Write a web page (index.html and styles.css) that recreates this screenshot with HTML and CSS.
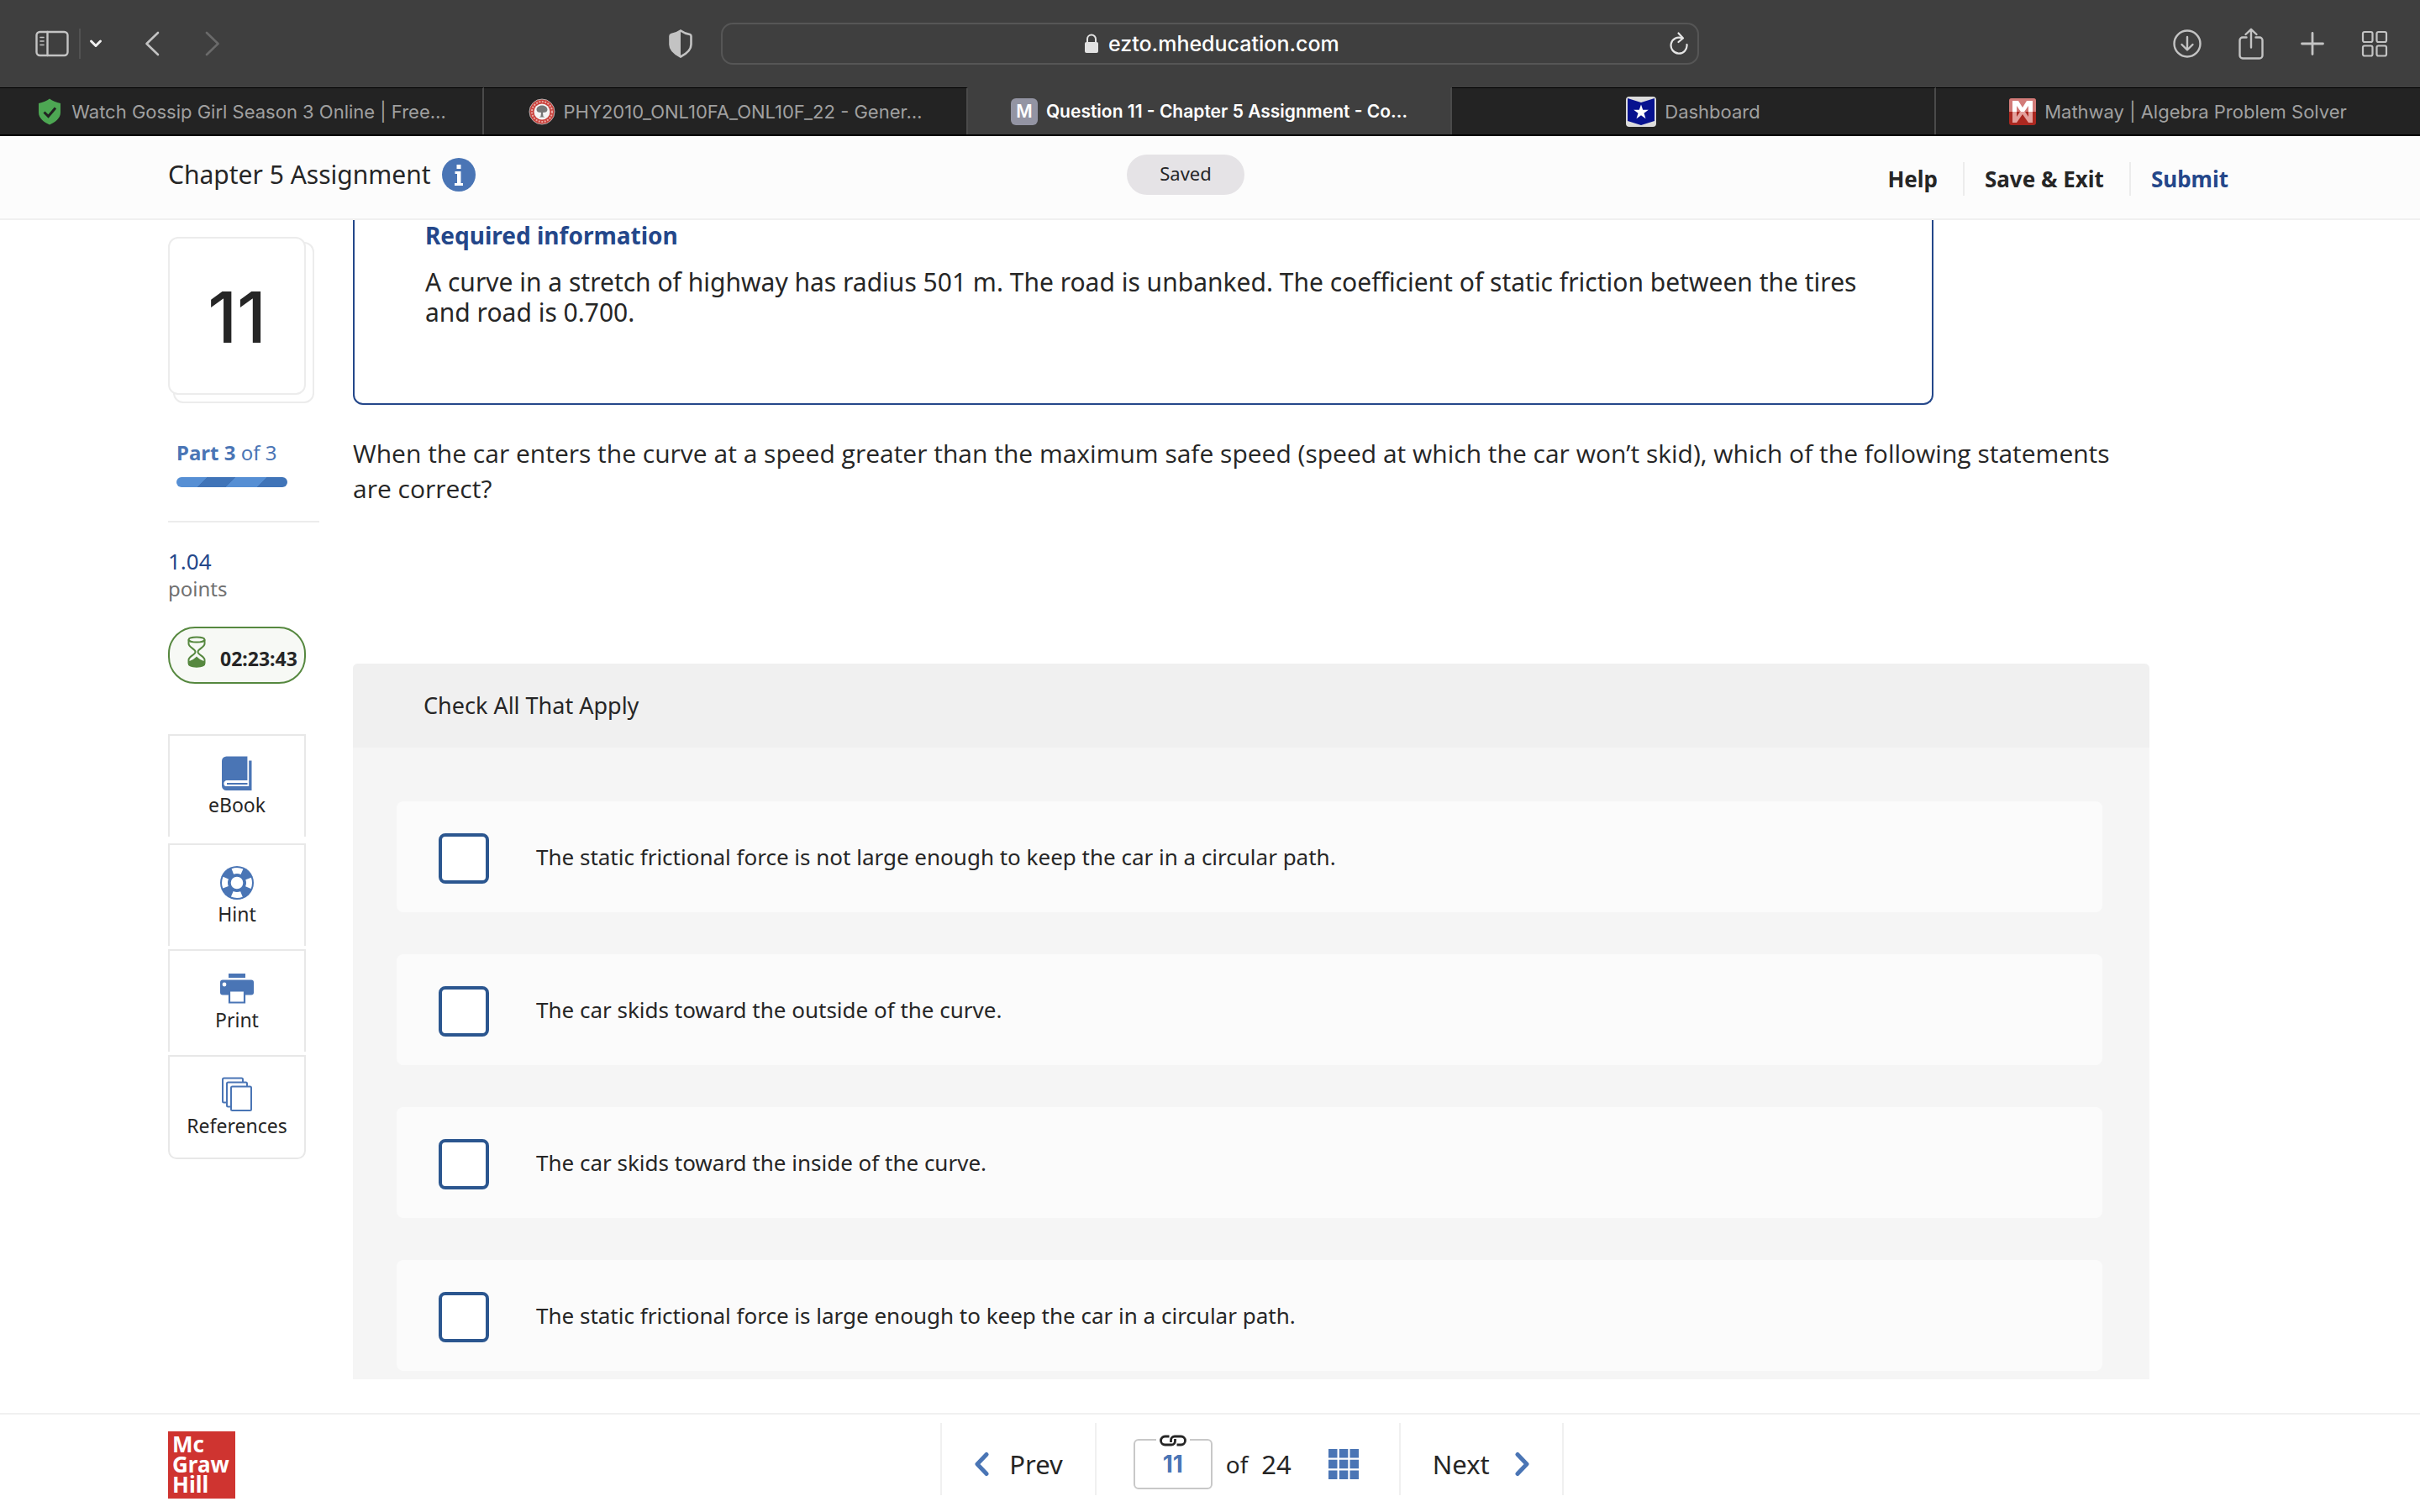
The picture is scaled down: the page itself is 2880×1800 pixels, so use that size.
FILE: index.html
```html
<!DOCTYPE html>
<html lang="en">
<head>
    <meta charset="UTF-8">
    <title>Question 11 - Chapter 5 Assignment - Connect</title>
    <link rel="stylesheet" href="styles.css">
</head>
<body>
    <!-- browser toolbar -->
    <div class="toolbar">
        <div class="toolbar-left">
            <button class="tool-btn" aria-label="Sidebar">
                <svg width="40" height="32" viewBox="0 0 40 32" fill="none" stroke="#c3c3c3" stroke-width="2.4" stroke-linecap="round"><rect x="1.5" y="2" width="37" height="28" rx="4"/><path d="M14.5 2v28"/><path stroke-width="1.6" d="M6 8.500h4M6 13h4M6 17.500h4"/></svg>
            </button>
            <span class="tool-sep"></span>
            <button class="tool-btn menu-btn" aria-label="Tab groups">
                <svg width="16" height="12" viewBox="0 0 16 12" fill="none" stroke="#f0f0f0" stroke-width="3" stroke-linecap="round" stroke-linejoin="round"><path d="M2.500 3l5.500 5.500L13.500 3"/></svg>
            </button>
            <button class="tool-btn back-btn" aria-label="Back">
                <svg width="18" height="30" viewBox="0 0 18 30" fill="none" stroke="#c3c3c3" stroke-width="2.600" stroke-linecap="round" stroke-linejoin="round"><path d="M16 2L2.500 15L16 28"/></svg>
            </button>
            <button class="tool-btn forward-btn" aria-label="Forward">
                <svg width="18" height="30" viewBox="0 0 18 30" fill="none" stroke="#6a6a6a" stroke-width="2.600" stroke-linecap="round" stroke-linejoin="round"><path d="M2 2l13.500 13L2 28"/></svg>
            </button>
            <button class="tool-btn shield-btn" aria-label="Privacy report">
                <svg width="28" height="34" viewBox="0 0 28 34"><path d="M14 1.500C17.500 4 22 5.500 25 6q1.500 .5 1.500 2v10C26.500 25 20 29.500 14 32.500C8 29.500 1.500 25 1.500 18V8q0-1.500 1.500-2C6 5.500 10.500 4 14 1.500z" fill="none" stroke="#c3c3c3" stroke-width="2.600"/><path d="M14 1.500C10.500 4 6 5.500 3 6q-1.500 .5-1.500 2v10C1.500 25 8 29.500 14 32.500z" fill="#c3c3c3"/></svg>
            </button>
        </div>
        <div class="address">
            <svg width="16" height="24" viewBox="0 0 16 24"><rect x="0" y="10" width="16" height="13" rx="2" fill="#e2e2e2"/><path d="M3 11V6.500a5 5 0 0 1 10 0V11" fill="none" stroke="#e2e2e2" stroke-width="2"/></svg>
            <input class="address-input" type="text" aria-label="Address" value="ezto.mheducation.com">
            <button class="tool-btn reload-btn" aria-label="Reload">
                <svg width="24" height="28" viewBox="0 0 24 28" fill="none" stroke="#e6e6e6" stroke-width="2.200" stroke-linecap="round" stroke-linejoin="round"><path d="M16 8.500A9.500 9.500 0 1 0 21.500 16"/><path d="M11.500 2.500L17 8.500L11.500 13"/></svg>
            </button>
        </div>
        <div class="toolbar-right">
            <button class="tool-btn" aria-label="Downloads">
                <svg width="34" height="38" viewBox="0 0 34 38" fill="none" stroke="#c3c3c3" stroke-width="2.400" stroke-linecap="round" stroke-linejoin="round"><circle cx="17" cy="19" r="15.500"/><path d="M17 11v15M10.500 20L17 26.500L23.500 20"/></svg>
            </button>
            <button class="tool-btn" aria-label="Share">
                <svg width="30" height="38" viewBox="0 0 30 38" fill="none" stroke="#c3c3c3" stroke-width="2.400" stroke-linecap="round" stroke-linejoin="round"><path d="M9.500 11.500H5a3.500 3.500 0 0 0-3.500 3.500v18A3.500 3.500 0 0 0 5 36.500h20a3.500 3.500 0 0 0 3.500-3.500V15a3.500 3.500 0 0 0-3.500-3.500h-4.500"/><path d="M15 23.500V2M8.500 8L15 1.800L21.500 8"/></svg>
            </button>
            <button class="tool-btn" aria-label="New tab">
                <svg width="28" height="28" viewBox="0 0 28 28" fill="none" stroke="#c3c3c3" stroke-width="2.800" stroke-linecap="round"><path d="M14 1.500v25M1.500 14h25"/></svg>
            </button>
            <button class="tool-btn" aria-label="Tab overview">
                <svg width="32" height="32" viewBox="0 0 32 32" fill="none" stroke="#c3c3c3" stroke-width="2.200"><rect x="2" y="2" width="11.500" height="12" rx="2"/><rect x="18.500" y="2" width="11.500" height="12" rx="2"/><rect x="2" y="18.500" width="11.500" height="12" rx="2"/><rect x="18.500" y="18.500" width="11.500" height="12" rx="2"/></svg>
            </button>
        </div>
    </div>

    <!-- browser tabs -->
    <nav class="tabs">
        <a class="tab" href="#">
            <svg width="32" height="32" viewBox="0 0 32 32"><path d="M16 0.500C19 3 24 5 29 6v11c0 7-6.500 11.500-13 14.500C9.500 28.500 3 24 3 17V6c5-1 10-3 13-5.500z" fill="#4da753"/><path d="M9.500 16.500l5 5l8.500-10" fill="none" stroke="#222" stroke-width="3"/></svg>
            <span>Watch Gossip Girl Season 3 Online | Free…</span>
        </a>
        <a class="tab" href="#">
            <svg width="32" height="32" viewBox="0 0 32 32"><circle cx="16" cy="16" r="15" fill="#c9403a"/><circle cx="16" cy="16" r="12" fill="none" stroke="#e9a8a4" stroke-width="2" stroke-dasharray="2 1.500"/><circle cx="16" cy="16" r="15" fill="none" stroke="#b9b0b0"/><circle cx="16" cy="16" r="9.500" fill="#f4f4f4"/><path d="M16 8.500c4 0 6.500 2.500 6.500 5c0 2.500-2 3.500-5.500 3.500l.5 4.500l2 1h-7l2-1l.5-4.500c-3.500 0-5.500-1-5.500-3.500c0-2.500 2.500-5 6.500-5z" fill="#777"/></svg>
            <span>PHY2010_ONL10FA_ONL10F_22 - Gener…</span>
        </a>
        <a class="tab tab-active" href="#">
            <span class="tab-letter">M</span>
            <span>Question 11 - Chapter 5 Assignment - Co…</span>
        </a>
        <a class="tab" href="#">
            <svg width="36" height="36" viewBox="0 0 36 36"><rect width="36" height="36" rx="4" fill="#dcdcdc"/><path d="M2 2l16 5l16-5v27l-16 5l-16-5z" fill="#07128f"/><path d="M18 9.500l2.200 6.200h6.600l-5.300 4l2 6.500l-5.500-3.900l-5.500 3.900l2-6.500l-5.300-4h6.600z" fill="#fff"/></svg>
            <span>Dashboard</span>
        </a>
        <a class="tab" href="#">
            <svg width="32" height="32" viewBox="0 0 32 32"><rect width="32" height="32" rx="3" fill="#ab2820"/><path d="M0 16V3a3 3 0 0 1 3-3h26a3 3 0 0 1 3 3v13z" fill="#d27b78"/><path d="M4 16V3h7l5 8l5-8h7v13h-5V9l-5 7h-4l-5-7v7z" fill="#fff"/><path d="M4 16v13h5l7-10l7 10h5V16h-5v6l-4-6h-6l-4 6v-6z" fill="#e3a19d"/></svg>
            <span>Mathway | Algebra Problem Solver</span>
        </a>
    </nav>

    <header class="header">
        <div class="header-title">
            <h1>Chapter 5 Assignment</h1>
            <button class="info-btn" aria-label="Assignment info">
                <svg width="40" height="40" viewBox="0 0 40 40"><circle cx="20" cy="20" r="20" fill="#4a75b5"/><path d="M17.500 8h5v5h-5zM15.500 16h7v14h2.500v3h-10v-3h3v-11h-2.500z" fill="#fff"/></svg>
            </button>
        </div>
        <div class="saved">Saved</div>
        <div class="header-actions">
            <button class="action">Help</button>
            <button class="action">Save &amp; Exit</button>
            <button class="action action-submit">Submit</button>
        </div>
    </header>

    <main class="main">
        <aside class="sidebar">
            <div class="question-number">11</div>
            <div class="part">
                <p class="part-label"><b>Part 3</b> of 3</p>
                <div class="part-bar"></div>
            </div>
            <p class="points-value">1.04</p>
            <p class="points-label">points</p>
            <div class="timer">
                <svg width="22" height="38" viewBox="0 0 22 38" fill="none" stroke="#56883f" stroke-width="2"><ellipse cx="11" cy="4.500" rx="9.500" ry="3"/><path d="M1.500 4.500v5c0 4 8 6 8 9.500s-8 5.500-8 9.500v4c0 5.500 19 5.500 19 0v-4c0-4-8-6-8-9.500s8-5.500 8-9.500v-5"/><path d="M2 31c3-1 6-1.500 9-5c3 3.500 6 4 9 5v2c0 4-18 4-18 0z" fill="#56883f"/></svg>
                <span>02:23:43</span>
            </div>
            <div class="tools">
                <button class="tool tool-ebook">
                    <svg width="40" height="42" viewBox="0 0 40 42" fill="#4a75b5"><path d="M2 6a5.500 5.500 0 0 1 5.500-5.500H32.500V29H7.500v0C5 29 4.500 34 7.500 34.500H32.500v-1.500H8v-1.500h24.500H34V5.500h3.500V41H7.500A5.500 5.500 0 0 1 2 35.500z"/><path d="M7.500 29.800H32.800V0.500h1.400V36H7.500a3.100 3.100 0 0 1 0-6.200z" fill="#fff"/><path d="M8 32h24.500v2H8z"/></svg>
                    <span>eBook</span>
                </button>
                <button class="tool">
                    <svg width="40" height="42" viewBox="0 0 40 42"><circle cx="20" cy="21" r="20" fill="#4a75b5"/><circle cx="20" cy="21" r="14.500" fill="none" stroke="#fff" stroke-width="7" stroke-dasharray="11.400 11.376" stroke-dashoffset="5.700"/><circle cx="20" cy="21" r="8.500" fill="#fff" stroke="#4a75b5" stroke-width="2.400"/></svg>
                    <span>Hint</span>
                </button>
                <button class="tool">
                    <svg width="40" height="42" viewBox="0 0 40 42" fill="#4a75b5"><path d="M10 3h20v5H10z"/><rect x="0" y="10.500" width="40" height="18" rx="3"/><circle cx="5" cy="16" r="2.400" fill="#fff"/><path d="M11 23.500h18V37.500H11z" fill="#fff" stroke="#4a75b5" stroke-width="2.200"/></svg>
                    <span>Print</span>
                </button>
                <button class="tool">
                    <svg width="40" height="42" viewBox="0 0 40 42" fill="#fff" stroke="#4a75b5" stroke-width="2"><rect x="3" y="1.500" width="24" height="29" rx="1.500"/><rect x="8" y="6.500" width="24" height="29" rx="1.500"/><rect x="13" y="11.500" width="24" height="28.500" rx="1.500"/></svg>
                    <span>References</span>
                </button>
            </div>
        </aside>

        <section class="content">
            <div class="required">
                <h2>Required information</h2>
                <p>A curve in a stretch of highway has radius 501 m. The road is unbanked. The coefficient of static friction between the tires and road is 0.700.</p>
            </div>
            <p class="question">When the car enters the curve at a speed greater than the maximum safe speed (speed at which the car won’t skid), which of the following statements are correct?</p>
            <form class="answers">
                <h3>Check All That Apply</h3>
                <div class="answer-list">
                    <label class="answer"><input type="checkbox" name="a1"><span>The static frictional force is not large enough to keep the car in a circular path.</span></label>
                    <label class="answer"><input type="checkbox" name="a2"><span>The car skids toward the outside of the curve.</span></label>
                    <label class="answer"><input type="checkbox" name="a3"><span>The car skids toward the inside of the curve.</span></label>
                    <label class="answer"><input type="checkbox" name="a4"><span>The static frictional force is large enough to keep the car in a circular path.</span></label>
                </div>
            </form>
        </section>
    </main>

    <footer class="footer">
        <div class="logo">Mc<br>Graw<br>Hill</div>
        <nav class="pager">
            <button class="pager-cell pager-prev">
                <svg width="18" height="30" viewBox="0 0 18 30" fill="none" stroke="#4a75b5" stroke-width="5" stroke-linecap="round" stroke-linejoin="round"><path d="M15 3.500L4 15L15 26.500"/></svg>
                <span>Prev</span>
            </button>
            <div class="pager-cell pager-count">
                <div class="page-box">
                    <input class="page-input" id="page" type="text" value="11" aria-label="Question number">
                    <svg class="page-link" width="40" height="14" viewBox="0 0 40 14"><rect width="40" height="14" fill="#fff"/><g fill="none" stroke="#262626" stroke-width="2.800"><path d="M15.500 2H10.500a5 5 0 0 0 0 10h7.500c2.500 0 4.500-2 4.500-4.500V5"/><path d="M24.500 12h5a5 5 0 0 0 0-10H22c-2.500 0-4.500 2-4.500 4.500V9"/></g></svg>
                </div>
                <span class="page-of">of</span>
                <span>24</span>
                <button class="grid-btn" aria-label="All questions">
                    <svg width="36" height="36" viewBox="0 0 36 36" fill="#4a75b5"><path d="M0 0h10.500v10.500H0zM12.800 0h10.500v10.500H12.800zM25.500 0H36v10.500H25.500zM0 12.800h10.500v10.500H0zM12.800 12.800h10.500v10.500H12.800zM25.500 12.800H36v10.500H25.500zM0 25.500h10.500V36H0zM12.800 25.500h10.500V36H12.800zM25.500 25.500H36V36H25.500z"/></svg>
                </button>
            </div>
            <button class="pager-cell pager-next">
                <span>Next</span>
                <svg width="18" height="30" viewBox="0 0 18 30" fill="none" stroke="#4a75b5" stroke-width="5" stroke-linecap="round" stroke-linejoin="round"><path d="M3 3.500L14 15L3 26.500"/></svg>
            </button>
        </nav>
    </footer>
</body>
</html>
```
FILE: styles.css
```css
*, *::after {
    box-sizing: border-box;
}

body {
    margin: 0;
    height: 100vh;
    display: flex;
    flex-direction: column;
    overflow: hidden;
    font-family: 'Noto Sans', 'Open Sans', sans-serif;
    color: #262626;
    background-color: #fff;
}

h1, h2, h3, p {
    margin: 0;
    font-weight: 400;
}

button {
    padding: 0;
    border: none;
    background: none;
    font-family: inherit;
    color: inherit;
    cursor: pointer;
}

svg {
    display: block;
    flex: none;
}

/* browser toolbar */
.toolbar {
    flex: none;
    display: grid;
    grid-template-columns: 14fr 19fr 14fr;
    align-items: center;
    height: 104px;
    padding-bottom: 1px;
    background-color: #3f3f3f;
}

.toolbar-left {
    display: flex;
    align-items: center;
    padding-left: 42px;
}

.tool-sep {
    width: 2px;
    height: 36px;
    margin: 0 10px 0 12px;
    background-color: #525252;
}

.back-btn {
    margin-left: 50px;
}

.forward-btn {
    margin-left: 54px;
}

.shield-btn {
    margin-left: auto;
    margin-right: 34px;
}

.address {
    position: relative;
    display: flex;
    justify-content: center;
    align-items: center;
    gap: 12px;
    height: 50px;
    padding-left: 10px;
    border: 2px solid #565656;
    border-radius: 14px;
}

.address-input {
    width: 280px;
    padding: 0;
    border: none;
    background: none;
    font-family: Inter, sans-serif;
    font-size: 25px;
    font-weight: 500;
    color: #fff;
}

.reload-btn {
    position: absolute;
    top: 8px;
    right: 10px;
}

.toolbar-right {
    display: flex;
    justify-content: flex-end;
    align-items: center;
    gap: 44px;
    padding-right: 38px;
}

/* browser tabs */
.tabs {
    flex: none;
    display: grid;
    grid-template-columns: repeat(5, 1fr);
    height: 58px;
    background-color: #232323;
    border-bottom: 2px solid #000;
}

.tab {
    display: flex;
    justify-content: center;
    align-items: center;
    gap: 10px;
    border-top: 1px solid #000;
    border-right: 2px solid #4a4a4a;
    font-family: Inter, sans-serif;
    font-size: 22px;
    color: #a0a0a0;
    text-decoration: none;
    white-space: nowrap;
}

.tab:last-child {
    border-right: none;
}

.tab-active {
    background-color: #3f3f3f;
    border-top-color: #3f3f3f;
    font-size: 21px;
    font-weight: 600;
    color: #fff;
}

.tab-letter {
    width: 32px;
    border-radius: 6px;
    background-color: #9394a3;
    line-height: 32px;
    text-align: center;
}

/* assignment header */
.header {
    flex: none;
    display: flex;
    justify-content: space-between;
    align-items: center;
    height: 100px;
    padding: 0 228px 0 200px;
    background-color: #fcfcfc;
    border-bottom: 2px solid #f0f0f0;
}

.header-title {
    display: flex;
    align-items: center;
    gap: 13px;
    margin-bottom: 6px;
}

.header-title h1 {
    font-size: 30px;
    line-height: 42px;
}

.saved {
    padding: 6px 39px 10px;
    margin: 0 0 6px 10px;
    border-radius: 24px;
    background-color: #e5e3e6;
    font-size: 22px;
    line-height: 32px;
}

.header-actions {
    display: flex;
    align-items: center;
    padding-top: 4px;
}

.action {
    height: 40px;
    padding: 0 30px 0 24px;
    border-left: 2px solid #ececec;
    font-size: 26px;
    font-weight: 700;
}

.action:first-child {
    padding-left: 0;
    border-left: none;
}

.action:last-child {
    padding-right: 0;
}

.action-submit {
    color: #24478a;
}

/* page body */
.main {
    flex: 1;
    min-height: 0;
    display: flex;
    gap: 40px;
    padding: 0 322px 0 200px;
    overflow: hidden;
}

.sidebar {
    flex: none;
    width: 180px;
    padding-top: 20px;
}

.question-number {
    position: relative;
    width: 164px;
    height: 188px;
    border: 2px solid #ececec;
    border-radius: 12px;
    background-color: #fff;
    font-family: Inter, sans-serif;
    font-size: 84px;
    font-weight: 500;
    line-height: 188px;
    text-align: center;
}

/* second card of the stack */
.question-number::after {
    content: '';
    position: absolute;
    z-index: -1;
    top: 4px;
    left: 4px;
    width: 168px;
    height: 192px;
    border: 2px solid #ececec;
    border-radius: 12px;
}

.part {
    padding: 53px 0 40px 10px;
    border-bottom: 2px solid #ececec;
    color: #4a75b5;
}

.part-label {
    font-size: 24px;
    line-height: 32px;
}

.part-bar {
    width: 132px;
    height: 12px;
    margin-top: 13px;
    border-radius: 6px;
    background: repeating-linear-gradient(135deg, #568fd4 0 26px, #4074b8 26px 50px);
}

.points-value {
    margin-top: 30px;
    font-size: 26px;
    line-height: 32px;
    color: #24478a;
}

.points-label {
    font-size: 24px;
    line-height: 34px;
    color: #707070;
}

.timer {
    display: flex;
    align-items: center;
    gap: 17px;
    width: 164px;
    height: 68px;
    margin-top: 28px;
    padding-left: 21px;
    border: 2px solid #56883f;
    border-radius: 32px;
    background-color: #f7f9f5;
    font-size: 23px;
    font-weight: 700;
}

.timer svg {
    margin-bottom: 8px;
}

.timer span {
    padding-top: 8px;
}

.tools {
    display: flex;
    flex-direction: column;
    gap: 4px;
    width: 164px;
    margin-top: 60px;
}

.tool {
    display: flex;
    flex-direction: column;
    align-items: center;
    gap: 2px;
    height: 122px;
    padding-top: 24px;
    border: 2px solid #e8e8e8;
    border-bottom: none;
    font-size: 23px;
    line-height: 28px;
}

.tool-ebook {
    margin-bottom: 4px;
}

.tool:last-child {
    height: 124px;
    border-bottom: 2px solid #e8e8e8;
    border-radius: 0 0 10px 10px;
}

.content {
    flex: 1;
}

.required {
    width: 88%;
    padding: 0 84px 90px;
    border: 2px solid #24478a;
    border-top: none;
    border-radius: 0 0 12px 12px;
}

.required h2 {
    margin-bottom: 20px;
    font-size: 28px;
    font-weight: 700;
    line-height: 36px;
    color: #24478a;
}

.required p {
    font-size: 30px;
    line-height: 36px;
}

.question {
    margin-top: 37px;
    font-family: 'Open Sans', sans-serif;
    font-size: 30px;
    line-height: 42px;
}

.answers {
    margin-top: 187px;
    border-radius: 6px 6px 0 0;
    background-color: #f5f5f5;
}

.answers h3 {
    padding: 0 84px;
    border-radius: 6px 6px 0 0;
    background-color: #f0f0f0;
    font-size: 27px;
    line-height: 100px;
}

.answer-list {
    display: flex;
    flex-direction: column;
    gap: 50px;
    padding: 64px 56px 10px 52px;
}

.answer {
    display: flex;
    align-items: center;
    gap: 56px;
    height: 132px;
    padding-left: 50px;
    border-radius: 8px;
    background-color: #fbfbfb;
    font-size: 26px;
}

.answer input {
    appearance: none;
    width: 60px;
    height: 60px;
    margin: 4px 0 0;
    border: 4px solid #2b568f;
    border-radius: 8px;
    background-color: #fff;
}

/* footer */
.footer {
    flex: none;
    display: flex;
    align-items: flex-start;
    height: 118px;
    padding: 10px 180px 0 200px;
    border-top: 2px solid #f0f0f0;
}

.logo {
    width: 80px;
    height: 80px;
    margin-top: 10px;
    padding: 3px 0 0 5px;
    background-color: #cf3430;
    font-size: 26px;
    font-weight: 700;
    line-height: 24px;
    color: #fff;
}

.pager {
    display: flex;
    margin: 0 auto;
    border-right: 2px solid #f0f0f0;
}

.pager-cell {
    display: flex;
    align-items: center;
    height: 86px;
    padding-top: 12px;
    border-left: 2px solid #f0f0f0;
    font-size: 31px;
}

.pager-prev {
    gap: 24px;
    padding-left: 38px;
    padding-right: 38px;
}

.pager-count {
    gap: 16px;
    padding-left: 44px;
    padding-right: 48px;
}

.pager-next {
    gap: 30px;
    padding-left: 38px;
    padding-right: 38px;
}

.page-box {
    position: relative;
}

.page-input {
    display: block;
    width: 94px;
    height: 60px;
    padding: 0;
    border: 2px solid #c8c8c8;
    border-radius: 6px;
    font-family: Inter, sans-serif;
    font-size: 28px;
    font-weight: 700;
    text-align: center;
    color: #4a75b5;
}

.page-link {
    position: absolute;
    top: -5px;
    left: 27px;
}

.page-of {
    font-size: 28px;
}

.grid-btn {
    margin-left: 28px;
}
```
